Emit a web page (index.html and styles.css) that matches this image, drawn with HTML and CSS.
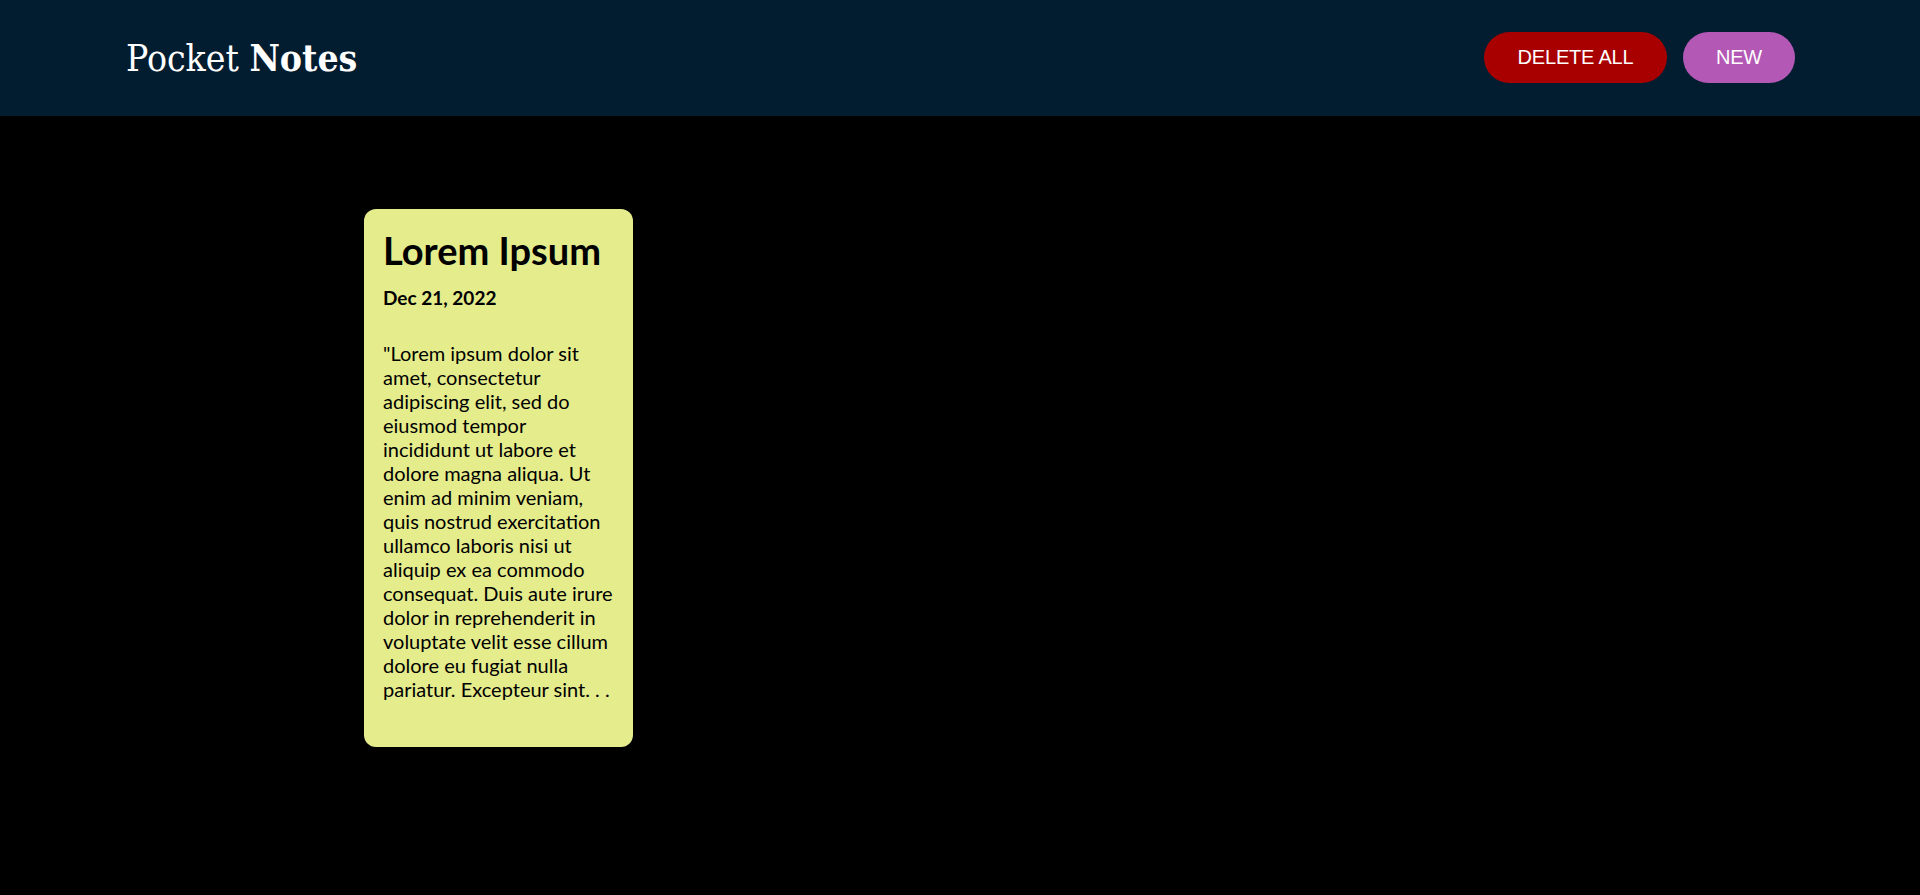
FILE: index.html
```html
<!DOCTYPE html>
<html lang="en">
<head>
<meta charset="utf-8">
<title>Pocket Notes</title>
<link rel="stylesheet" href="styles.css">
</head>
<body>
<header class="topbar">
  <h1 class="logo">Pocket <b>Notes</b></h1>
  <div class="actions">
    <button class="btn btn-delete">DELETE ALL</button>
    <button class="btn btn-new">NEW</button>
  </div>
</header>
<main class="board">
  <article class="note">
    <h2 class="note-title">Lorem Ipsum</h2>
    <p class="note-date">Dec 21, 2022</p>
    <p class="note-body">"Lorem ipsum dolor sit amet, consectetur adipiscing elit, sed do eiusmod tempor incididunt ut labore et dolore magna aliqua. Ut enim ad minim veniam, quis nostrud exercitation ullamco laboris nisi ut aliquip ex ea commodo consequat. Duis aute irure dolor in reprehenderit in voluptate velit esse cillum dolore eu fugiat nulla pariatur. Excepteur sint. . .</p>
  </article>
</main>
</body>
</html>
```

FILE: styles.css
```css
* { box-sizing: border-box; }
html, body { margin: 0; padding: 0; }
body {
  background: #000;
  min-height: 895px;
  font-family: Lato, "Noto Sans", sans-serif;
}
.topbar {
  height: 116px;
  background: #031d30;
  display: flex;
  align-items: center;
  justify-content: space-between;
  padding: 0 125px 0 126px;
}
.logo {
  margin: 0;
  font-family: "DejaVu Serif", serif;
  font-stretch: condensed;
  font-weight: normal;
  font-size: 37px;
  line-height: 44px;
  color: #fff;
}
.logo b { font-weight: bold; }
.actions {
  display: flex;
  gap: 16px;
  margin-top: -1px;
}
.btn {
  border: none;
  height: 51px;
  border-radius: 26px;
  padding: 0 20px;
  font-family: "Liberation Sans", Arial, sans-serif;
  font-size: 20px;
  letter-spacing: -0.2px;
  white-space: nowrap;
  color: #fff;
  cursor: pointer;
}
.btn-delete { background: #a80000; width: 183px; }
.btn-new { background: #b358b5; width: 112px; }
.board {
  width: 1192px;
  margin: 0 auto;
  padding-top: 93px;
  display: grid;
  grid-template-columns: repeat(4, 269px);
  column-gap: 38px;
}
.note {
  background: #e4ec8c;
  border-radius: 12px;
  padding: 17px 19px 46px 19px;
  color: #000;
}
.note-title {
  margin: 0;
  font-size: 38px;
  font-weight: bold;
  line-height: 48px;
}
.note-date {
  margin: 12px 0 0 0;
  font-size: 19px;
  font-weight: bold;
  line-height: 24px;
}
.note-body {
  margin: 31px 0 0 0;
  font-size: 20px;
  line-height: 24px;
}
```
